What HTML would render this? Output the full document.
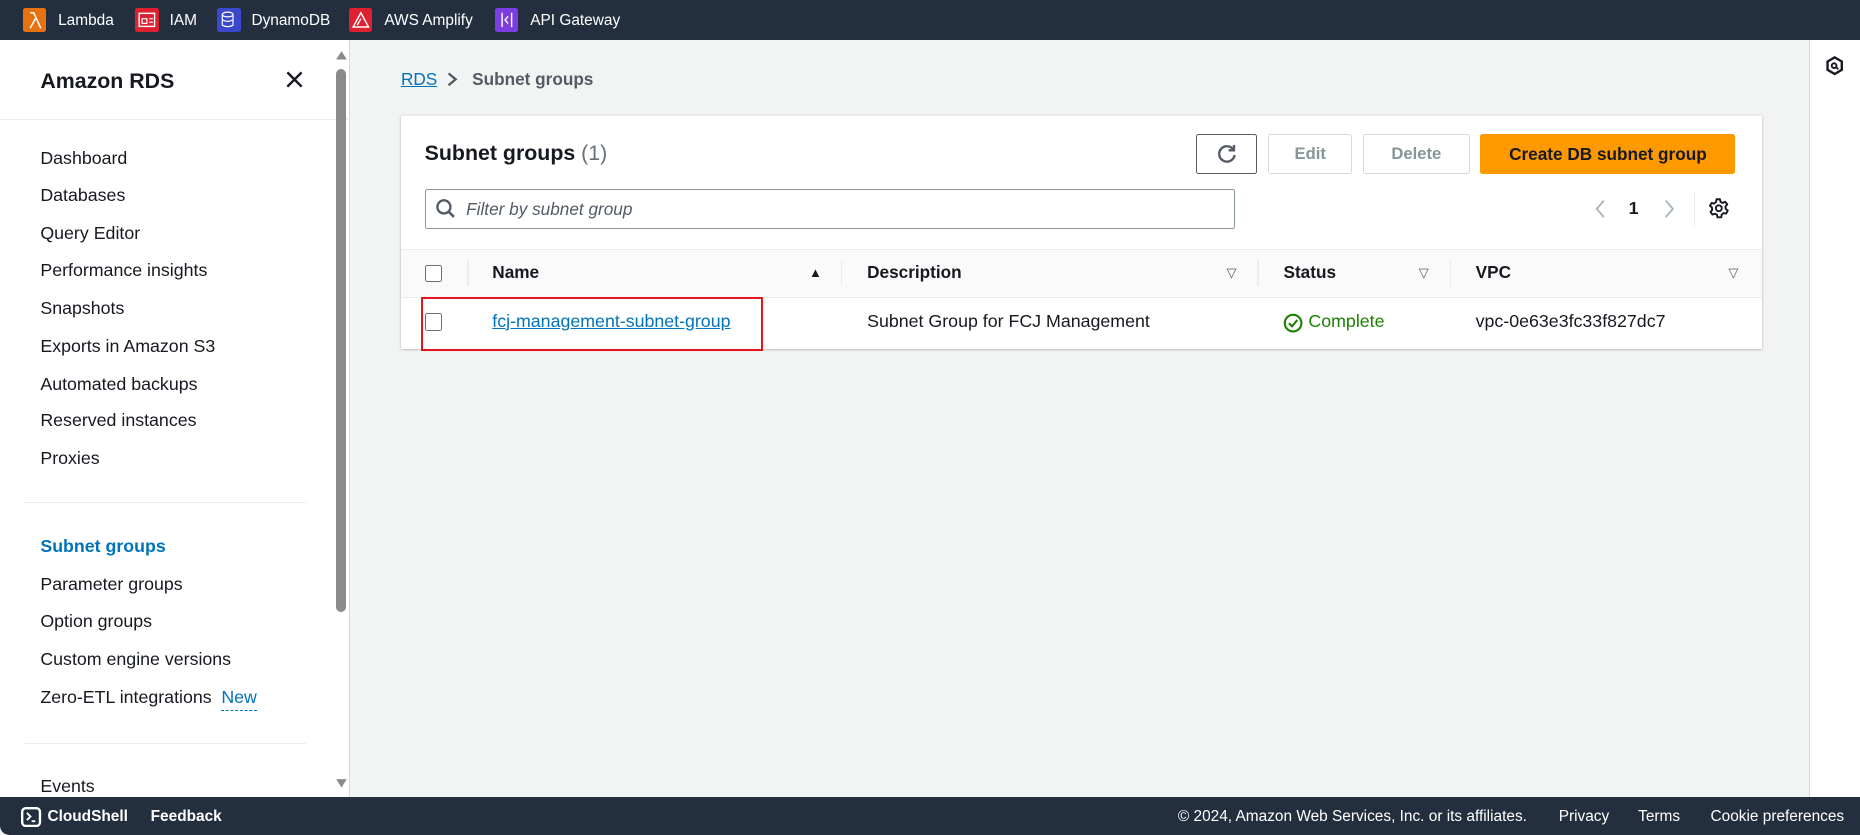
<!DOCTYPE html>
<html><head><meta charset="utf-8"><style>
*{box-sizing:border-box;margin:0;padding:0}
html,body{width:1860px;height:835px;overflow:hidden}
body{font-family:"Liberation Sans",sans-serif;background:#f2f3f3;color:#16191f}
#r{zoom:1.18622;width:1568px;height:704px;position:relative;font-size:14px}
.a{position:absolute;white-space:nowrap}
.top{left:0;top:0;width:1568px;height:34px;background:#232f3e;color:#fff;font-size:13px}
.ic{position:absolute;top:7px;width:20px;height:20px;border-radius:2px}
.side{left:0;top:34px;width:295px;height:638px;background:#fff;border-right:1px solid #d5dbdb}
.nav{left:34px;font-size:15px;color:#16191f}
.foot{left:0;top:672px;width:1568px;height:32px;background:#232f3e;color:#fff;font-size:13px;border-radius:0 0 0 8px}
.card{left:338px;top:97px;width:1147px;height:197px;background:#fff;box-shadow:0 1px 2px rgba(0,0,0,.3);border-top:1px solid #eaeded}
.btn{top:113px;height:34px;border:1px solid #d5dbdb;border-radius:2px;background:#fff;color:#879596;font-weight:bold;font-size:14px;display:flex;align-items:center;justify-content:center}
.th{font-weight:bold;font-size:14.5px;top:221px;color:#16191f}
.tri{font-size:11px;color:#545b64;top:223px}
.sep{top:219px;width:1px;height:22px;background:#eaeded}
.cb{width:15px;height:15px;border:1.5px solid #687078;border-radius:2px;background:#fff}
.td{top:262px;font-size:15px}
</style></head><body><div id="r">
<div class="a top">
 <div class="ic" style="left:19px;background:#e7720f"></div><svg class="a" style="left:19px;top:7px" width="20" height="20"><path d="M6 4H9L15 17M10.5 9L6 17" fill="none" stroke="#fff" stroke-width="1.3"/></svg><span class="a" style="left:49px;top:10px">Lambda</span>
 <div class="ic" style="left:114px;background:#dd2130"></div><svg class="a" style="left:114px;top:7px" width="20" height="20"><rect x="3.5" y="4.5" width="13" height="11" fill="none" stroke="#fff" stroke-width="1.2"/><rect x="6" y="9" width="4" height="4" fill="none" stroke="#fff"/><path d="M12 9H15M12 12H15" stroke="#fff"/></svg><span class="a" style="left:143px;top:10px">IAM</span>
 <div class="ic" style="left:183px;background:#3b48cc"></div><svg class="a" style="left:183px;top:7px" width="20" height="20"><ellipse cx="9" cy="5.5" rx="4.5" ry="2" fill="none" stroke="#fff"/><path d="M4.5 5.5V14.5Q9 17 13.5 14.5V5.5M4.5 10Q9 12.5 13.5 10" fill="none" stroke="#fff"/></svg><span class="a" style="left:212px;top:10px">DynamoDB</span>
 <div class="ic" style="left:294px;background:#dd2130"></div><svg class="a" style="left:294px;top:7px" width="20" height="20"><path d="M10 4L3.5 16H16.5ZM10 9L7 14.5" fill="none" stroke="#fff" stroke-width="1.2"/></svg><span class="a" style="left:324px;top:10px">AWS Amplify</span>
 <div class="ic" style="left:417px;background:#7b3ee0"></div><svg class="a" style="left:417px;top:7px" width="20" height="20"><path d="M6 4V16M14 4V16M11 7L8.5 10L11 13" fill="none" stroke="#fff" stroke-width="1.2"/></svg><span class="a" style="left:447px;top:10px">API Gateway</span>
</div>
<div class="a side"></div>
<div class="a" style="left:34px;top:58px;font-size:18px;font-weight:bold">Amazon RDS</div>
<svg class="a" style="left:240px;top:59px" width="16" height="16"><path d="M2 2L14 14M14 2L2 14" stroke="#16191f" stroke-width="2"/></svg>
<div class="a" style="left:0;top:100px;width:295px;height:1px;background:#eaeded"></div>
<svg class="a" style="left:282px;top:42px" width="11" height="9"><path d="M1 8L5.5 1L10 8Z" fill="#8a8a8a"/></svg>
<div class="a" style="left:283px;top:58px;width:9px;height:458px;background:#8a8a8a;border-radius:5px"></div>
<svg class="a" style="left:282px;top:656px" width="11" height="9"><path d="M1 1L5.5 8L10 1Z" fill="#8a8a8a"/></svg>
<div class="a nav" style="top:125px">Dashboard</div>
<div class="a nav" style="top:156px">Databases</div>
<div class="a nav" style="top:188px">Query Editor</div>
<div class="a nav" style="top:219px">Performance insights</div>
<div class="a nav" style="top:251px">Snapshots</div>
<div class="a nav" style="top:283px">Exports in Amazon S3</div>
<div class="a nav" style="top:315px">Automated backups</div>
<div class="a nav" style="top:346px">Reserved instances</div>
<div class="a nav" style="top:378px">Proxies</div>
<div class="a" style="left:21px;top:423px;width:237px;height:1px;background:#eaeded"></div>
<div class="a nav" style="top:452px;color:#0073bb;font-weight:bold">Subnet groups</div>
<div class="a nav" style="top:484px">Parameter groups</div>
<div class="a nav" style="top:515px">Option groups</div>
<div class="a nav" style="top:547px">Custom engine versions</div>
<div class="a nav" style="top:579px">Zero-ETL integrations <span style="color:#0073bb;margin-left:4px;border-bottom:1px dashed #0073bb;padding-bottom:3px">New</span></div>
<div class="a" style="left:21px;top:626px;width:237px;height:1px;background:#eaeded"></div>
<div class="a nav" style="top:654px">Events</div>
<div class="a" style="left:1525px;top:34px;width:43px;height:638px;background:#fff;border-left:1px solid #d5dbdb"></div>
<svg class="a" style="left:1538px;top:46px" width="18" height="18"><path d="M9 2L15 5.5V12.5L9 16L3 12.5V5.5Z" fill="none" stroke="#16191f" stroke-width="2"/><circle cx="8.5" cy="9" r="2" fill="none" stroke="#16191f" stroke-width="1.6"/><path d="M10 10L12 12" stroke="#16191f" stroke-width="1.6"/></svg>
<div class="a" style="left:338px;top:58px;font-size:14.5px;color:#0073bb;text-decoration:underline">RDS</div>
<svg class="a" style="left:375px;top:60px" width="12" height="14"><path d="M3 2L9 7L3 12" fill="none" stroke="#545b64" stroke-width="2"/></svg>
<div class="a" style="left:398px;top:58px;font-size:14.5px;font-weight:bold;color:#545b64">Subnet groups</div>
<div class="a card"></div>
<div class="a" style="left:358px;top:119px;font-size:18px;font-weight:bold">Subnet groups <span style="font-weight:normal;color:#687078">(1)</span></div>
<div class="a btn" style="left:1008px;width:52px;border-color:#545b64"><svg width="20" height="20"><path d="M15.5 6.5A6.5 6.5 0 1 0 16.5 11" fill="none" stroke="#545b64" stroke-width="2"/><path d="M16 2.5V7H11.5" fill="none" stroke="#545b64" stroke-width="2"/></svg></div>
<div class="a btn" style="left:1069px;width:71px">Edit</div>
<div class="a btn" style="left:1149px;width:90px">Delete</div>
<div class="a btn" style="left:1248px;width:215px;background:#ff9900;border-color:#ff9900;color:#16191f;font-size:14.5px">Create DB subnet group</div>
<div class="a" style="left:358px;top:159px;width:683px;height:34px;border:1px solid #879596;border-radius:2px;background:#fff"></div>
<svg class="a" style="left:367px;top:167px" width="18" height="18"><circle cx="7.5" cy="7.5" r="5.5" fill="none" stroke="#545b64" stroke-width="2"/><path d="M11.5 11.5L16 16" stroke="#545b64" stroke-width="2.2"/></svg>
<div class="a" style="left:393px;top:168px;font-style:italic;color:#545b64;font-size:14.5px">Filter by subnet group</div>
<svg class="a" style="left:1342px;top:166px" width="14" height="20"><path d="M10 3L4 10L10 17" fill="none" stroke="#aab7b8" stroke-width="1.6"/></svg>
<div class="a" style="left:1373px;top:167px;font-weight:bold;font-size:15px">1</div>
<svg class="a" style="left:1400px;top:166px" width="14" height="20"><path d="M4 3L10 10L4 17" fill="none" stroke="#aab7b8" stroke-width="1.6"/></svg>
<div class="a" style="left:1428px;top:161px;width:1px;height:30px;background:#eaeded"></div>
<svg class="a" style="left:1439px;top:166px" width="19" height="19" viewBox="0 0 20 20"><path d="M8.5 2H11.5L12 4.3L14 5.3L16.1 4.2L18 6.6L16.4 8.3L16.6 10.5L18.4 12L17 14.7L14.7 14.3L13 15.8L12.7 18H9.3L8.9 15.8L7 14.9L4.8 15.6L3.1 13.3L4.6 11.5L4.4 9.3L2.6 7.8L4.1 5.3L6.3 5.8L8 4.4Z" fill="none" stroke="#16191f" stroke-width="1.7" stroke-linejoin="round"/><circle cx="10.5" cy="10" r="2.6" fill="none" stroke="#16191f" stroke-width="1.7"/></svg>
<div class="a" style="left:338px;top:210px;width:1147px;height:41px;background:#fafafa;border-top:1px solid #eaeded;border-bottom:1px solid #eaeded"></div>
<div class="a cb" style="left:358px;top:223px"></div>
<div class="a sep" style="left:394px"></div>
<div class="a th" style="left:415px">Name</div><div class="a tri" style="left:682px;color:#16191f">▲</div>
<div class="a sep" style="left:709px"></div>
<div class="a th" style="left:731px">Description</div><div class="a tri" style="left:1034px">▽</div>
<div class="a sep" style="left:1060px"></div>
<div class="a th" style="left:1082px">Status</div><div class="a tri" style="left:1196px">▽</div>
<div class="a sep" style="left:1222px"></div>
<div class="a th" style="left:1244px">VPC</div><div class="a tri" style="left:1457px">▽</div>
<div class="a cb" style="left:358px;top:264px"></div>
<div class="a td" style="left:415px;color:#0073bb;text-decoration:underline">fcj-management-subnet-group</div>
<div class="a td" style="left:731px">Subnet Group for FCJ Management</div>
<svg class="a" style="left:1082px;top:264px" width="17" height="17"><circle cx="8.5" cy="8.5" r="7" fill="none" stroke="#1d8102" stroke-width="1.8"/><path d="M5 8.7L7.6 11.2L12 6" fill="none" stroke="#1d8102" stroke-width="1.8"/></svg>
<div class="a td" style="left:1103px;color:#1d8102">Complete</div>
<div class="a td" style="left:1244px">vpc-0e63e3fc33f827dc7</div>
<div class="a" style="left:355px;top:250px;width:288px;height:46px;border:2px solid #e8141c"></div>
<div class="a foot">
 <svg class="a" style="left:18px;top:8px" width="17" height="17"><rect x="1" y="1" width="15" height="15" rx="3" fill="none" stroke="#fff" stroke-width="2"/><path d="M5 5L8 8L5 11M9 12H12" fill="none" stroke="#fff" stroke-width="1.6"/></svg>
 <span class="a" style="left:40px;top:9px;font-weight:bold">CloudShell</span>
 <span class="a" style="left:127px;top:9px;font-weight:bold">Feedback</span>
 <span class="a" style="left:993px;top:9px">© 2024, Amazon Web Services, Inc. or its affiliates.</span>
 <span class="a" style="left:1314px;top:9px">Privacy</span>
 <span class="a" style="left:1381px;top:9px">Terms</span>
 <span class="a" style="left:1442px;top:9px">Cookie preferences</span>
</div>
</div></body></html>
